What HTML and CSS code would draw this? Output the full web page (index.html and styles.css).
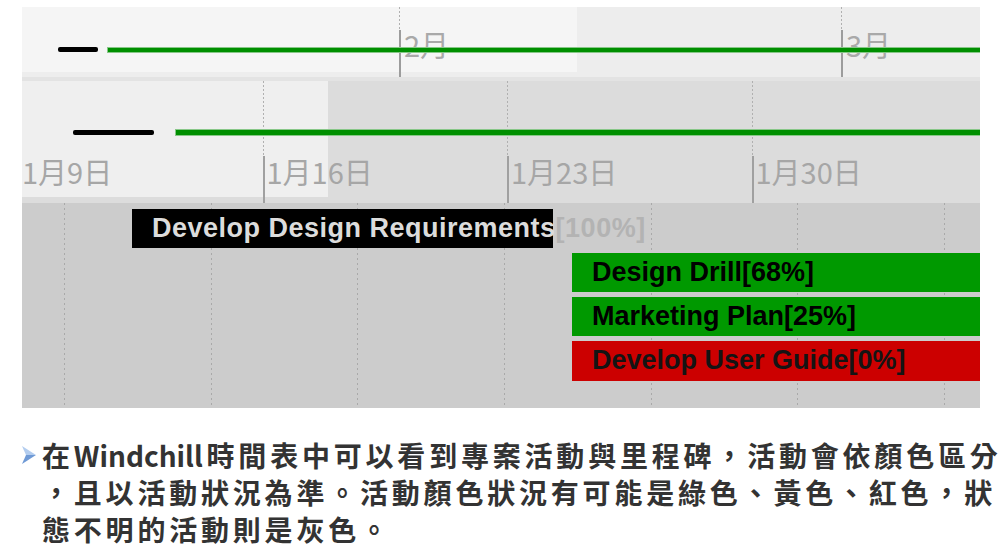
FILE: index.html
```html
<!DOCTYPE html>
<html lang="zh-Hant">
<head>
<meta charset="utf-8">
<title>Windchill 時間表</title>
<link rel="stylesheet" href="styles.css">
</head>
<body>
<div class="page">
  <div class="chart">
    <div class="band-month">
      <div class="month-grid">
        <div class="month"><div class="dots"></div><div class="mlabel">2月</div></div>
        <div class="month"><div class="dots"></div><div class="mlabel">3月</div></div>
      </div>
      <div class="ms-row ms-row1"><span class="ms-black"></span><span class="ms-green"></span></div>
    </div>
    <div class="band-day">
      <div class="day-grid">
        <div class="day"><div class="dots"></div><div class="dlabel">1月9日</div></div>
        <div class="day"><div class="dots"></div><div class="dlabel">1月16日</div></div>
        <div class="day"><div class="dots"></div><div class="dlabel">1月23日</div></div>
        <div class="day"><div class="dots"></div><div class="dlabel">1月30日</div></div>
      </div>
      <div class="ms-row ms-row2"><span class="ms-black"></span><span class="ms-green"></span></div>
    </div>
    <div class="band-tasks">
      <div class="task-grid">
        <span class="vline"></span><span class="vline"></span><span class="vline"></span><span class="vline"></span><span class="vline"></span><span class="vline"></span><span class="vline"></span>
      </div>
      <div class="tasks">
        <div class="task black">Develop Design Requirements<span class="pct">[100%]</span></div>
        <div class="task green">Design Drill[68%]</div>
        <div class="task green">Marketing Plan[25%]</div>
        <div class="task red">Develop User Guide[0%]</div>
      </div>
    </div>
  </div>
  <div class="note">
    <svg class="bullet" width="14" height="18" viewBox="0 0 14 18" aria-hidden="true">
      <polygon points="0,0 14,9 4,9" fill="#b3cdef"/>
      <polygon points="0,18 14,9 4,9" fill="#6f9ad6"/>
    </svg>
    <p class="note-text">
      <span>在<span class="latin">Windchill</span>時間表中可以看到專案活動與里程碑，活動會依顏色區分</span>
      <span>，且以活動狀況為準。活動顏色狀況有可能是綠色、黃色、紅色，狀</span>
      <span>態不明的活動則是灰色。</span>
    </p>
  </div>
</div>
</body>
</html>
```

FILE: styles.css
```css
html, body {
  margin: 0;
  background: #ffffff;
}

.page {
  padding: 7px 0 0 22px;
}

.chart {
  width: 958px;
}

/* ---------- month band ---------- */
.band-month {
  position: relative;
  height: 70px;
  overflow: hidden;
  background: linear-gradient(#f5f5f5, #f5f5f5) 0 0 / 555px 65px no-repeat, #ededed;
}

.month-grid {
  position: absolute;
  top: 0;
  bottom: 0;
  left: 377px;
  display: flex;
}

.month {
  width: 442px;
  flex: none;
  display: flex;
  flex-direction: column;
}

.dots {
  width: 2px;
  background: repeating-linear-gradient(to bottom, #b0b0b0 0 2px, transparent 2px 4px) 0 0 / 1px 100% no-repeat;
}

.month .dots {
  height: 23px;
}

.mlabel {
  flex: 1;
  border-left: 2px solid #9c9c9c;
  padding-left: 3px;
  font: 29px/1 "Noto Sans CJK TC", "Noto Sans CJK SC", sans-serif;
  color: #a9a9a9;
}

.ms-row {
  position: relative;
  display: flex;
  align-items: flex-start;
}

.ms-row1 {
  padding-top: 40px;
}

.ms-row1 .ms-black {
  width: 40px;
  height: 5px;
  margin-left: 36px;
}

.ms-row1 .ms-green {
  margin-left: 10px;
  margin-top: 0.5px;
}

.ms-black {
  background: #000;
  border-radius: 2px;
}

.ms-green {
  flex: 1;
  height: 4px;
  background: #008f00;
  box-shadow: 0 0 0 1px #88c788;
}

/* ---------- day band ---------- */
.band-day {
  position: relative;
  height: 122px;
  overflow: hidden;
  border-top: 4px solid #e3e3e3;
  background: linear-gradient(#efefef, #efefef) 0 0 / 306px 116px no-repeat, #dcdcdc;
}

.day-grid {
  position: absolute;
  top: 0;
  bottom: 0;
  left: -4px;
  display: flex;
}

.day {
  width: 244.5px;
  flex: none;
  display: flex;
  flex-direction: column;
}

.day .dots {
  height: 75px;
}

.dlabel {
  flex: 1;
  border-left: 2px solid #a0a0a0;
  padding: 1px 0 0 2px;
  font: 29px/1 "Noto Sans CJK TC", "Noto Sans CJK SC", sans-serif;
  color: #a6a6a6;
}

.ms-row2 {
  padding-top: 49px;
}

.ms-row2 .ms-black {
  width: 81px;
  height: 5px;
  margin-left: 51px;
}

.ms-row2 .ms-green {
  height: 5px;
  margin-left: 22px;
  margin-top: -0.5px;
}

/* ---------- task band ---------- */
.band-tasks {
  position: relative;
  height: 205px;
  overflow: hidden;
  background: #cccccc;
}

.task-grid {
  position: absolute;
  top: 0;
  bottom: 0;
  left: 42px;
  display: flex;
}

.vline {
  width: 146.67px;
  flex: none;
  background: repeating-linear-gradient(to bottom, #a9a9a9 0 2px, transparent 2px 5px) 0 0 / 1px 100% no-repeat;
}

.tasks {
  position: relative;
  display: flex;
  flex-direction: column;
  align-items: flex-start;
  gap: 5px;
  padding-top: 6px;
}

.task {
  box-sizing: border-box;
  height: 39px;
  padding-left: 20px;
  font: bold 27px/39px "Liberation Sans", Arial, sans-serif;
  white-space: nowrap;
}

.task.black {
  margin-left: 110px;
  width: 421px;
  background: #000;
  color: #dcdcdc;
  letter-spacing: 0.5px;
}

.pct {
  color: #b3b3b3;
}

.task.green {
  margin-left: 550px;
  width: 408px;
  background: #009900;
  color: #000;
}

.task.red {
  margin-left: 550px;
  width: 408px;
  height: 40px;
  background: #cc0000;
  color: #141414;
}

/* ---------- note ---------- */
.note {
  display: flex;
  align-items: flex-start;
  margin-top: 29px;
}

.bullet {
  flex: none;
  margin-top: 9px;
}

.note-text {
  margin: 0 0 0 6px;
  font: bold 28px/37px "Noto Sans CJK TC", "Noto Sans CJK SC", sans-serif;
  color: #333333;
  letter-spacing: 3.8px;
}

.note-text > span {
  display: block;
  white-space: nowrap;
}

.note-text .latin {
  letter-spacing: 0;
  margin-right: 3.8px;
}
```
